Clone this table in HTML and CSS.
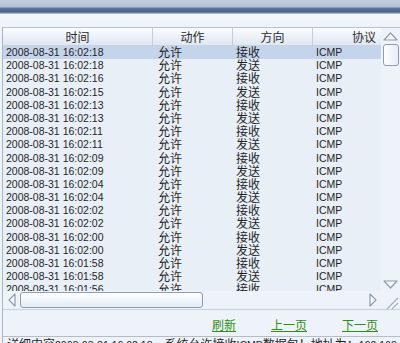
FILE: index.html
```html
<!DOCTYPE html>
<html>
<head>
<meta charset="utf-8">
<link rel="stylesheet" href="styles.css">
</head>
<body>
<div class="app">
  <div class="topbar"></div>
  <div class="gap"></div>
  <div class="panel">
    <div class="grid-area">
      <div class="table">
        <div class="thead">
          <div class="th">时间</div>
          <div class="th sep">动作</div>
          <div class="th sep">方向</div>
          <div class="th sep right">协议</div>
        </div>
        <div class="tbody">
          <div class="row sel"><span class="c1">2008-08-31 16:02:18</span><span class="c2">允许</span><span class="c3">接收</span><span class="c4">ICMP</span></div>
          <div class="row"><span class="c1">2008-08-31 16:02:18</span><span class="c2">允许</span><span class="c3">发送</span><span class="c4">ICMP</span></div>
          <div class="row"><span class="c1">2008-08-31 16:02:16</span><span class="c2">允许</span><span class="c3">接收</span><span class="c4">ICMP</span></div>
          <div class="row"><span class="c1">2008-08-31 16:02:15</span><span class="c2">允许</span><span class="c3">发送</span><span class="c4">ICMP</span></div>
          <div class="row"><span class="c1">2008-08-31 16:02:13</span><span class="c2">允许</span><span class="c3">接收</span><span class="c4">ICMP</span></div>
          <div class="row"><span class="c1">2008-08-31 16:02:13</span><span class="c2">允许</span><span class="c3">发送</span><span class="c4">ICMP</span></div>
          <div class="row"><span class="c1">2008-08-31 16:02:11</span><span class="c2">允许</span><span class="c3">接收</span><span class="c4">ICMP</span></div>
          <div class="row"><span class="c1">2008-08-31 16:02:11</span><span class="c2">允许</span><span class="c3">发送</span><span class="c4">ICMP</span></div>
          <div class="row"><span class="c1">2008-08-31 16:02:09</span><span class="c2">允许</span><span class="c3">接收</span><span class="c4">ICMP</span></div>
          <div class="row"><span class="c1">2008-08-31 16:02:09</span><span class="c2">允许</span><span class="c3">发送</span><span class="c4">ICMP</span></div>
          <div class="row"><span class="c1">2008-08-31 16:02:04</span><span class="c2">允许</span><span class="c3">接收</span><span class="c4">ICMP</span></div>
          <div class="row"><span class="c1">2008-08-31 16:02:04</span><span class="c2">允许</span><span class="c3">发送</span><span class="c4">ICMP</span></div>
          <div class="row"><span class="c1">2008-08-31 16:02:02</span><span class="c2">允许</span><span class="c3">接收</span><span class="c4">ICMP</span></div>
          <div class="row"><span class="c1">2008-08-31 16:02:02</span><span class="c2">允许</span><span class="c3">发送</span><span class="c4">ICMP</span></div>
          <div class="row"><span class="c1">2008-08-31 16:02:00</span><span class="c2">允许</span><span class="c3">接收</span><span class="c4">ICMP</span></div>
          <div class="row"><span class="c1">2008-08-31 16:02:00</span><span class="c2">允许</span><span class="c3">发送</span><span class="c4">ICMP</span></div>
          <div class="row"><span class="c1">2008-08-31 16:01:58</span><span class="c2">允许</span><span class="c3">接收</span><span class="c4">ICMP</span></div>
          <div class="row"><span class="c1">2008-08-31 16:01:58</span><span class="c2">允许</span><span class="c3">发送</span><span class="c4">ICMP</span></div>
          <div class="row"><span class="c1">2008-08-31 16:01:56</span><span class="c2">允许</span><span class="c3">接收</span><span class="c4">ICMP</span></div>
        </div>
      </div>
      <div class="vscroll">
        <div class="vbtn"><svg width="15" height="9" viewBox="0 0 15 9"><path d="M1 8 L7.5 1 L14 8 Z" fill="#f8fafd" stroke="#8e9aab" stroke-width="1.2" stroke-linejoin="round"/></svg></div>
        <div class="vthumb"></div>
        <div class="fill"></div>
        <div class="vbtn"><svg width="15" height="9" viewBox="0 0 15 9"><path d="M1 1 L7.5 8 L14 1 Z" fill="#f8fafd" stroke="#8e9aab" stroke-width="1.2" stroke-linejoin="round"/></svg></div>
      </div>
    </div>
    <div class="hscroll">
      <div class="hbtn"><svg width="8" height="14" viewBox="0 0 8 14"><path d="M7 1 L1 7 L7 13 Z" fill="#f8fafd" stroke="#8e9aab" stroke-width="1.2" stroke-linejoin="round"/></svg></div>
      <div class="hthumb"></div>
      <div class="fill"></div>
      <div class="hbtn"><svg width="8" height="14" viewBox="0 0 8 14"><path d="M1 1 L7 7 L1 13 Z" fill="#f8fafd" stroke="#8e9aab" stroke-width="1.2" stroke-linejoin="round"/></svg></div>
      <div class="grip"><svg width="16" height="14" viewBox="0 0 16 14"><path d="M15 3 L4 14 M15 8 L9 14" stroke="#a3afbf" stroke-width="1.3"/><path d="M16 4 L5 15 M16 9 L10 15" stroke="#ffffff" stroke-width="1"/></svg></div>
    </div>
    <div class="footer">
      <a class="link" href="#">刷新</a>
      <a class="link" href="#">上一页</a>
      <a class="link" href="#">下一页</a>
    </div>
    <div class="detail">详细内容<span class="lat">2008-08-31 16:02:18</span>，系统允许接收<span class="lat">ICMP</span>数据包！地址为：<span class="lat">192.168.1.1</span></div>
  </div>
</div>
</body>
</html>
```
FILE: styles.css
```css
* { box-sizing: border-box; }
html, body { margin: 0; padding: 0; }
body {
  background: #eef3f9;
  font-family: "Liberation Sans", "Noto Sans CJK SC", sans-serif;
  color: #1f1f1f;
}
.app {
  width: 400px;
  height: 343px;
  overflow: hidden;
  background: #eef3f9;
}
.topbar {
  height: 14px;
  background: linear-gradient(#c3cfdf 0px, #b0bfd3 7px, #62779b 8px, #4a6089 12px, #8a9cba 13px, #c9d3e2 14px);
}
.gap {
  height: 13px;
  background: linear-gradient(#f3f6fb, #eef3f9);
}
.panel {
  margin-left: 2px;
  border-left: 1px solid #aab6c6;
}
.grid-area {
  display: flex;
  height: 264px;
  border-top: 1px solid #b7c3d2;
}
.table {
  width: 379px;
  display: flex;
  flex-direction: column;
  background: #e9eff7;
}
.thead {
  display: grid;
  grid-template-columns: 149px 80px 80px 1fr;
  height: 18px;
  background: linear-gradient(#fbfcfe, #dfe7f2);
  border-bottom: 1px solid #c9d3df;
}
.th {
  font-family: "Noto Sans CJK SC", sans-serif;
  font-size: 12px;
  line-height: 17px;
  text-align: center;
  color: #2a2a2a;
}
.th.sep { border-left: 1px solid #c3cedb; }
.th.right { text-align: right; padding-right: 5px; }
.tbody {
  flex: 1;
  overflow: hidden;
}
.row {
  display: grid;
  grid-template-columns: 149px 80px 80px 1fr;
  height: 13.2px;
  line-height: 13.2px;
  white-space: nowrap;
}
.row.sel { background: #c4d4ea; }
.c1 { font-size: 10.5px; padding-left: 3px; }
.c2, .c3 {
  font-family: "Noto Sans CJK SC", sans-serif;
  font-size: 12px;
  line-height: 12px;
  height: 13.2px;
  overflow: visible;
}
.c2 { padding-left: 6px; }
.c3 { padding-left: 4px; }
.c4 { font-size: 10.5px; padding-left: 4px; }
.vscroll {
  width: 19px;
  display: flex;
  flex-direction: column;
  align-items: center;
  background: #eef3f9;
}
.vbtn {
  height: 15px;
  display: flex;
  align-items: center;
  justify-content: center;
  padding-top: 2px;
}
.vthumb {
  margin-top: 1px;
  width: 16px;
  height: 22px;
  border: 1px solid #8f9db0;
  border-radius: 3px;
  background: linear-gradient(90deg, #ffffff, #e6edf6);
}
.fill { flex: 1; }
.hscroll {
  height: 18px;
  display: flex;
  align-items: center;
  background: #eef3f9;
}
.hbtn {
  width: 17px;
  display: flex;
  justify-content: center;
  align-items: center;
}
.hthumb {
  width: 183px;
  height: 16px;
  border: 1px solid #8f9db0;
  border-radius: 3px;
  background: linear-gradient(#ffffff, #e3ebf5);
}
.grip {
  width: 19px;
  display: flex;
  justify-content: center;
  align-items: flex-end;
  height: 18px;
}
.footer {
  height: 28px;
  border-top: 1px solid #c6d0dc;
  border-bottom: 1px solid #b2bdcb;
  display: flex;
  justify-content: flex-end;
  gap: 35px;
  padding: 8px 22px 0 0;
  background: #eef3f9;
}
.link {
  font-family: "Noto Sans CJK SC", sans-serif;
  font-size: 12px;
  line-height: 14px;
  color: #2f8f12;
  text-decoration: underline;
}
.detail {
  font-family: "Noto Sans CJK SC", sans-serif;
  font-size: 12px;
  line-height: 14px;
  padding-left: 4px;
  white-space: nowrap;
  color: #1f1f1f;
}
.lat { font-family: "Liberation Sans", sans-serif; font-size: 10.5px; }
```
